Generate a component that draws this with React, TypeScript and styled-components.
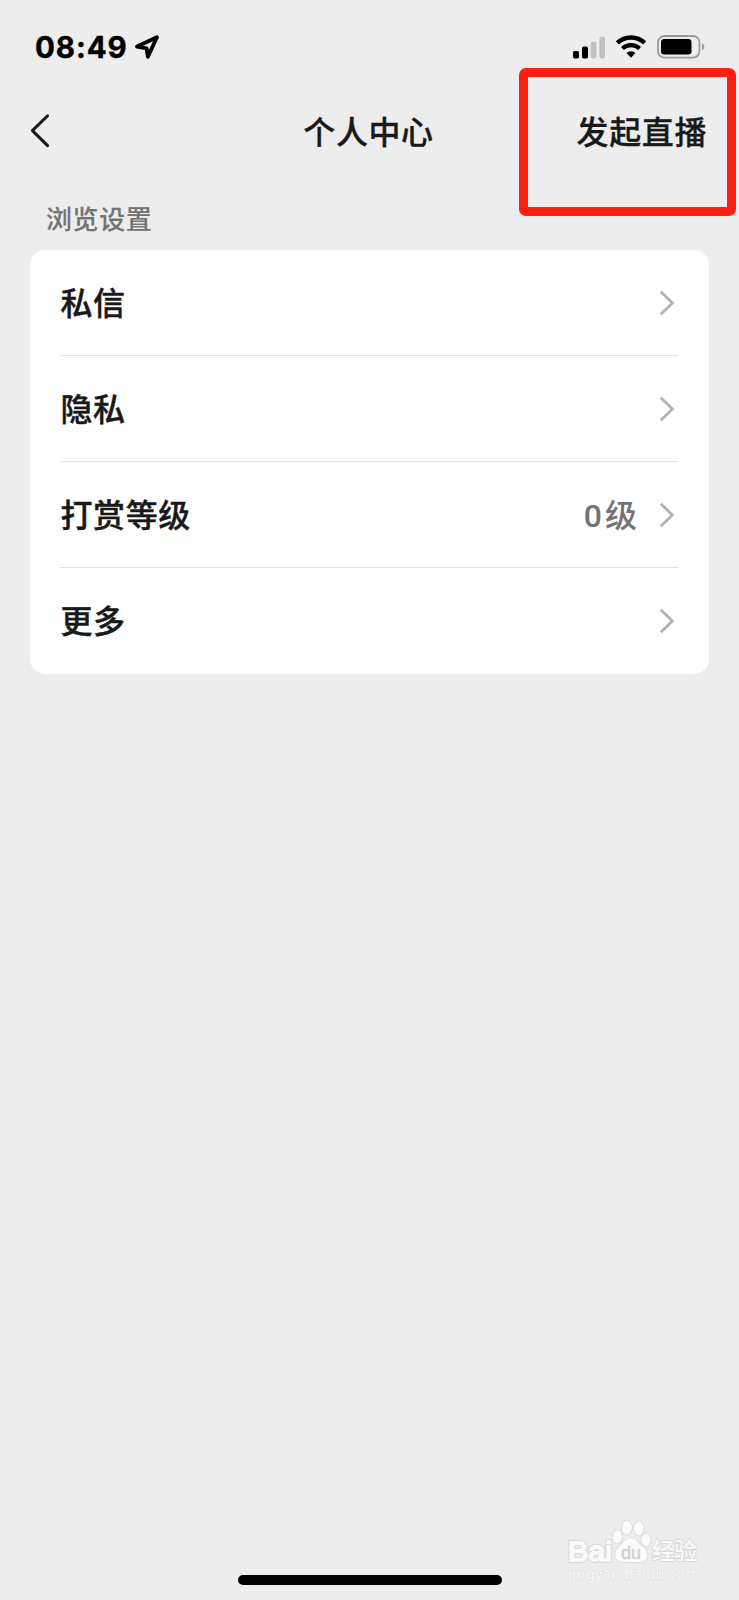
import React from 'react';
import styled, { createGlobalStyle } from 'styled-components';

const GlobalStyle = createGlobalStyle`
  *, *::before, *::after { box-sizing: border-box; }
  body {
    margin: 0;
    background: #ededed;
    font-family: Inter, "Noto Sans CJK SC", sans-serif;
  }
`;

const Screen = styled.div`
  position: relative;
  width: 739px;
  height: 1600px;
  display: flex;
  flex-direction: column;
  background: #ededed;
  color: #191919;
  overflow: hidden;
`;

const StatusBar = styled.header`
  height: 94px;
  padding: 0 34px 0 35px;
  display: flex;
  justify-content: space-between;
  align-items: center;
  color: #000;
`;

const StatusGroup = styled.div<{ $gap: number }>`
  display: flex;
  align-items: center;
  gap: ${(p) => p.$gap}px;
`;

const Time = styled.span`
  font-size: 29.5px;
  line-height: 36px;
  font-weight: 700;
  letter-spacing: 0.9px;
  -webkit-text-stroke: 0.4px currentColor;
`;

const NavBar = styled.nav`
  height: 74px;
  padding: 0 32px 0 30px;
  display: grid;
  grid-template-columns: 1fr auto 1fr;
  align-items: center;
`;

const NavText = styled.span<{ $end?: boolean }>`
  justify-self: ${(p) => (p.$end ? 'end' : 'center')};
  padding-top: 3px;
  font-size: 32px;
  line-height: 48px;
  font-weight: 500;
  letter-spacing: 0.6px;
  -webkit-text-stroke: 0.3px currentColor;
`;

const SectionTitle = styled.h2`
  margin: 0;
  height: 82px;
  padding: 32px 0 0 46px;
  font-size: 26px;
  line-height: 40px;
  font-weight: 500;
  letter-spacing: 0.6px;
  color: #737373;
  -webkit-text-stroke: 0.15px currentColor;
`;

const Card = styled.ul`
  list-style: none;
  margin: 0 30px;
  padding: 0 31px 0 30px;
  border-radius: 15px;
  background: #fff;
`;

const Row = styled.li`
  height: 106px;
  display: flex;
  align-items: center;
  padding: 0 3px 0 0.5px;

  & + & {
    box-shadow: 0 -1px 0 #e3e3e3;
  }
`;

const RowLabel = styled.span`
  flex: 1;
  padding-top: 2px;
  font-size: 32px;
  line-height: 48px;
  font-weight: 500;
  letter-spacing: 0.6px;
  -webkit-text-stroke: 0.4px currentColor;
`;

const RowValue = styled.span`
  margin-right: 19px;
  padding-top: 2px;
  font-family: Roboto, "Noto Sans CJK SC", sans-serif;
  font-size: 32px;
  line-height: 48px;
  font-weight: 500;
  letter-spacing: 3px;
  color: #737373;
`;

const HomeIndicator = styled.div`
  width: 264px;
  height: 10px;
  margin: auto auto 15px 238px;
  border-radius: 5px;
  background: #000;
`;

const Highlight = styled.div`
  position: absolute;
  left: 519px;
  top: 68px;
  width: 217px;
  height: 148px;
  border: 9px solid #fe1f10;
  border-radius: 7px;
`;

const Watermark = styled.svg`
  position: absolute;
  left: 560px;
  top: 1512px;
`;

const Chevron = () => (
  <svg width="16" height="26" viewBox="0 0 16 26" fill="none">
    <path d="M1.8 1.8 13.4 13 1.8 24.2" stroke="#b2b2b2" strokeWidth="2.8" />
  </svg>
);

const BackIcon = () => (
  <svg width="22" height="36" viewBox="0 0 22 36" fill="none">
    <path d="M17.6 2.8 2.4 17.6l15.2 15" stroke="#191919" strokeWidth="3" strokeLinecap="round" strokeLinejoin="round" />
  </svg>
);

const LocationIcon = () => (
  <svg width="26" height="26" viewBox="0 0 26 26" fill="none">
    <path d="M21.9 3.2 2.1 12.6l9.5 1.8 1.3 8.4Z" stroke="#000" strokeWidth="3.9" strokeLinejoin="round" />
  </svg>
);

const SignalIcon = () => (
  <svg width="32" height="23" viewBox="0 0 32 23">
    <rect x="0" y="15" width="6" height="7.5" rx="1.8" />
    <rect x="9" y="10.5" width="6" height="12" rx="1.8" />
    <rect x="17.8" y="5.5" width="5.6" height="17" rx="1.8" fill="#c1c1c1" />
    <rect x="26.4" y="0.5" width="5.6" height="22" rx="1.8" fill="#c1c1c1" />
  </svg>
);

const WifiIcon = () => (
  <svg width="32" height="24" viewBox="0 0 32 24" fill="none">
    <path d="M2.3 7.9a20 20 0 0 1 27.4 0" stroke="#000" strokeWidth="4.6" />
    <path d="M7.4 13.6a12.4 12.4 0 0 1 17.2 0" stroke="#000" strokeWidth="4.2" />
    <path d="m16 22.8-4.5-4.8a6.4 6.4 0 0 1 9 0Z" fill="#000" />
  </svg>
);

const BatteryIcon = () => (
  <svg width="48" height="24" viewBox="0 0 48 24">
    <rect x="1" y="1" width="41.4" height="21.6" rx="6.3" fill="none" stroke="#9b9b9b" strokeWidth="1.8" />
    <rect x="4" y="4" width="30.5" height="15.5" rx="3.2" />
    <path d="M45 8.2c3 1.6 3 5.8 0 7.4Z" fill="#9b9b9b" />
  </svg>
);

const rows: { label: string; value?: string }[] = [
  { label: '私信' },
  { label: '隐私' },
  { label: '打赏等级', value: '0级' },
  { label: '更多' },
];

export default function App() {
  return (
    <>
      <GlobalStyle />
      <Screen>
        <StatusBar>
          <StatusGroup $gap={7}>
            <Time>08:49</Time>
            <LocationIcon />
          </StatusGroup>
          <StatusGroup $gap={10}>
            <SignalIcon />
            <WifiIcon />
            <BatteryIcon />
          </StatusGroup>
        </StatusBar>
        <NavBar>
          <BackIcon />
          <NavText>个人中心</NavText>
          <NavText $end>发起直播</NavText>
        </NavBar>
        <SectionTitle>浏览设置</SectionTitle>
        <Card>
          {rows.map((row) => (
            <Row key={row.label}>
              <RowLabel>{row.label}</RowLabel>
              {row.value && <RowValue>{row.value}</RowValue>}
              <Chevron />
            </Row>
          ))}
        </Card>
        <HomeIndicator />
        <Highlight />
        <Watermark width="150" height="72" viewBox="0 0 150 72">
          <g fill="#fafafa" stroke="#d8d8d8" strokeWidth="1.6" paintOrder="stroke">
            <text x="8" y="49" fontFamily="Liberation Sans, sans-serif" fontSize="28" textLength="44" lengthAdjust="spacingAndGlyphs" strokeWidth="3.8">Bai</text>
            <text x="8" y="49" fontFamily="Liberation Sans, sans-serif" fontSize="28" textLength="44" lengthAdjust="spacingAndGlyphs" stroke="#fafafa" strokeWidth="1.8">Bai</text>
            <ellipse cx="57.3" cy="24.8" rx="4.6" ry="6.6" />
            <ellipse cx="66.8" cy="15.6" rx="5" ry="7.2" />
            <ellipse cx="78.8" cy="16.6" rx="5" ry="7" />
            <ellipse cx="86" cy="28" rx="4.6" ry="6.4" />
            <path d="M71 26c-6 0-8 5-12 9-5 4-6 15 4 15h17c10 0 9-11 3-15-5-4-6-9-12-9Z" />
            <text x="92" y="47" fontFamily="Noto Sans CJK SC, sans-serif" fontWeight="500" fontSize="23" textLength="45">经验</text>
            <text x="8" y="67" fontFamily="Noto Sans, sans-serif" fontSize="14" strokeWidth="1" stroke="#dedede" textLength="131">jingyan.baidu.com</text>
          </g>
          <text x="61" y="46.5" fill="#d0d0d0" fontFamily="Liberation Sans, sans-serif" fontSize="18.5" textLength="20" lengthAdjust="spacingAndGlyphs" stroke="#d0d0d0" strokeWidth="0.5">du</text>
        </Watermark>
      </Screen>
    </>
  );
}
